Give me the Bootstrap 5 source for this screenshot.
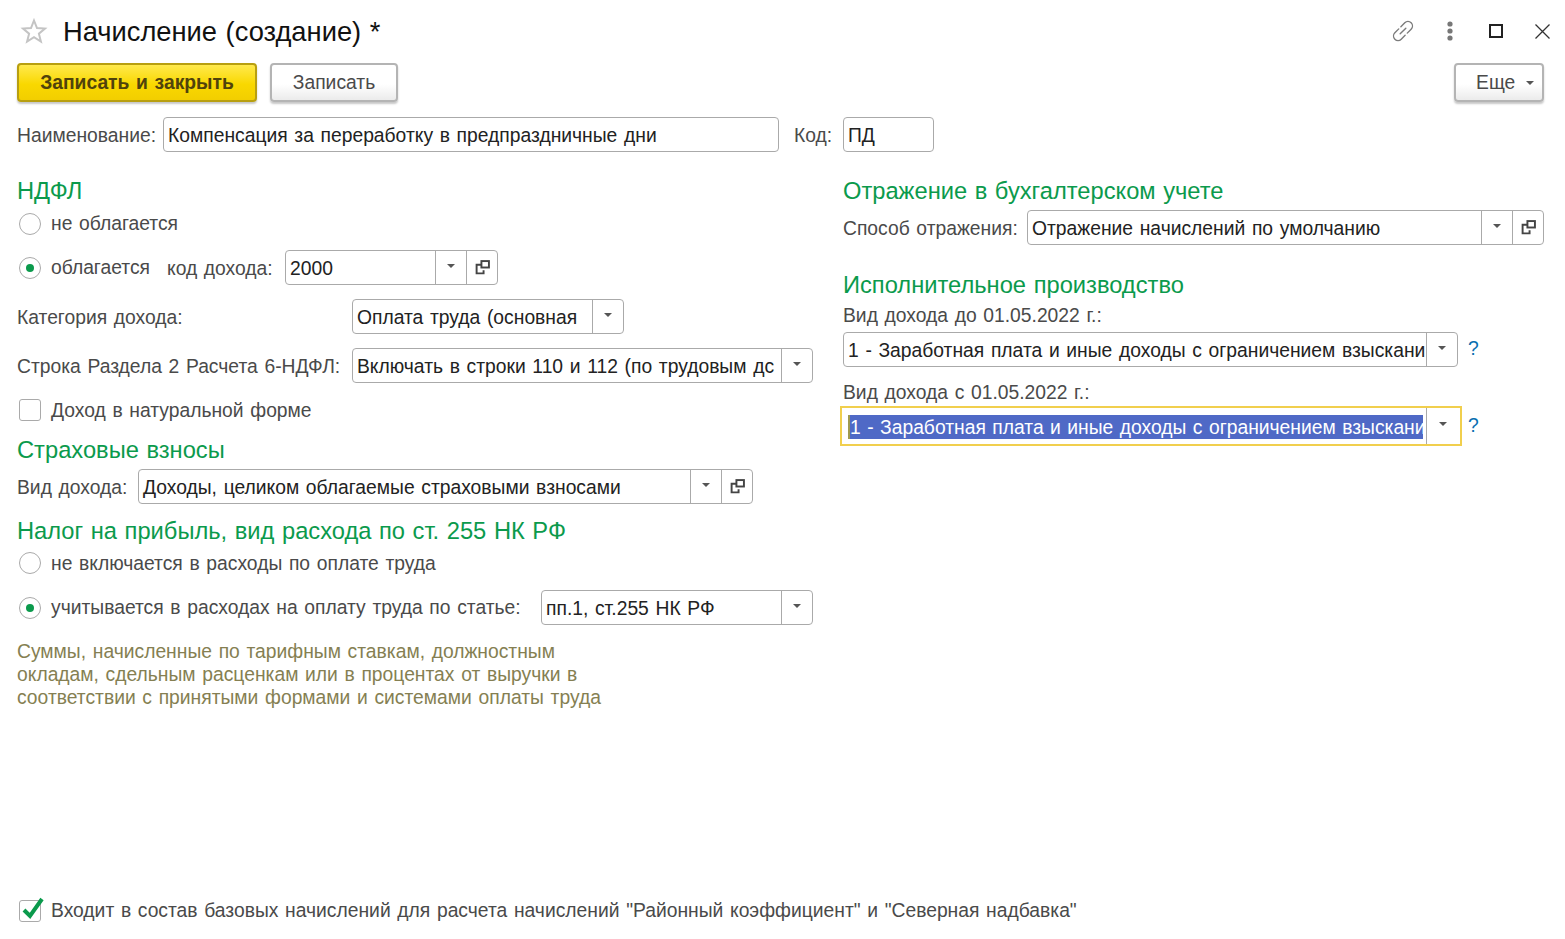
<!DOCTYPE html>
<html lang="ru"><head><meta charset="utf-8"><title>Начисление</title>
<link href="https://cdn.jsdelivr.net/npm/bootstrap@5.3.0/dist/css/bootstrap.min.css" rel="stylesheet">
<style>
html,body{height:939px;overflow:hidden}
body{font-family:"Liberation Sans",Arial,sans-serif;font-size:19.3px;word-spacing:1.3px;color:#4a4a4a;background:#fff;line-height:23px}
.page{height:939px;padding:0 21px 0 17px;position:relative}
.title-row{height:63px;padding-bottom:1px}
.title-txt{font-size:27.3px;word-spacing:1px;color:#111;margin-left:15px;line-height:31px}
.star{margin-left:3px}
.win-tools svg{display:block}
.ic-dots{margin-left:30px}
.ic-max{margin-left:34px}
.ic-close{margin-left:31px;margin-right:-7px}
.cmd{height:39px;border-radius:4px;font-size:19.3px;word-spacing:1.3px;line-height:33px;padding:0 0 1px;border:2px solid #b4b4b4;background:linear-gradient(#fff 55%,#ebebeb);color:#4a4a4a;box-shadow:0 2px 2px #c8c8c8}
.cmd-main{width:240px;font-weight:700;color:#50430c;border-color:#b89f10;background:linear-gradient(#ffe94d,#f9d800 55%,#f2ce00)}
.cmd-plain{width:128px;margin-left:13px}
.cmd-more{width:90px;padding-left:12px}
.caret-s{display:inline-block;width:0;height:0;border-left:4px solid transparent;border-right:4px solid transparent;border-top:4px solid #555}
.fld{height:35px;border:1px solid #aaa;border-radius:4px;background:#fff;color:#222;overflow:hidden;flex:none}
.fld-text{flex:1 1 0;min-width:0;padding:0 4px;white-space:nowrap;overflow:hidden;line-height:35px;height:33px}
.fld-btn{width:31px;border-left:1px solid #aaa;flex:none}
.lbl{white-space:nowrap;flex:none;padding-top:2px}
.l-name{width:138px}.f-name{width:616px;margin-left:8px}
.l-code{width:40px;margin-left:15px}.f-code{width:91px;margin-left:9px}
.l-rad{width:101px;flex:none}
.l-inc{width:109px;margin-left:15px}.f-inc{width:213px;margin-left:9px}
.l-wide{width:335px}.f-cat{width:272px}.f-line{width:461px}
.l-kind{width:112px}.f-kind{width:615px;margin-left:9px}
.f-ref{width:517px}.f-exec{width:615px}
.row-name{margin-top:15px}
.col-l{width:796px;flex:none}
.col-r{width:701px;flex:none;margin-left:30px}
.hd{font-size:23.7px;word-spacing:1px;color:#0b9a4c;line-height:28px;white-space:nowrap}
.rd{width:22px;height:22px;border:1px solid #aaa;border-radius:50%;margin-left:2px;margin-right:10px;flex:none;background:#fff}
.rd-on::after{content:"";width:8px;height:8px;border-radius:50%;background:#0b9a4c}
.cb{width:22px;height:22px;border:1px solid #aaa;border-radius:3px;margin-left:2px;margin-right:10px;flex:none;background:#fff;position:relative}
.cb svg{position:absolute;left:1px;top:-6px}
.h35{height:35px}
.h23{height:23px}
.dn{padding-top:2px}
.note{color:#857f52;line-height:23px;width:620px}
.q{color:#0a6fb0;margin-left:10px;line-height:33px}
.q2{margin-left:6px;line-height:40px}
.focus-wrap{width:622px;height:40px;border:2px solid #f1cf4d;margin-left:-3px;padding:0 0 0 6px;background:#fff;flex:none}
.focus-wrap .sel{background:#4f69c6;color:#fff;line-height:23px;height:24px;padding-top:1px;white-space:nowrap;overflow:hidden;flex:none;width:575px;margin-top:1px;border-left:2px solid #a09a50;word-spacing:1.1px}
.focus-wrap .fld-btn{height:36px;width:33px;margin-left:3px}
.bottom{position:absolute;left:17px;top:899px;height:23px}
.mt5{margin-top:5px}.mt6{margin-top:6px}.mt7{margin-top:7px}.mt13{margin-top:13px}.mt14{margin-top:14px}.mt15{margin-top:15px}.mt16{margin-top:16px}.mt25{margin-top:25px}.mt26{margin-top:26px}.mt2{margin-top:2px}
</style></head><body>
<div class="page">
 <div class="title-row d-flex align-items-center">
  <svg class="star" width="28" height="28" viewBox="0 0 28 28"><path d="M14 3.500l3 7.500 8 .6-6.100 5.100 2 7.800L14 20.200l-6.900 4.300 2-7.800L3 11.600l8-.6z" fill="none" stroke="#c4c4c4" stroke-width="2"/></svg>
  <div class="title-txt">Начисление (создание) *</div>
  <div class="win-tools d-flex align-items-center ms-auto">
   <svg width="24" height="24" viewBox="0 0 24 24" fill="none" stroke="#7c7c7c" stroke-width="1.400" stroke-linecap="round"><g transform="rotate(-45 12 12)"><path d="M10.500 7.500H5a4.500 4.500 0 0 0 0 9h5.500"/><path d="M13.500 7.500H19a4.500 4.500 0 0 1 0 9h-5.500"/><path d="M8 12h8"/></g></svg>
   <svg class="ic-dots" width="10" height="20" viewBox="0 0 10 20" fill="#777"><circle cx="5" cy="3" r="2.600"/><circle cx="5" cy="10" r="2.600"/><circle cx="5" cy="17" r="2.600"/></svg>
   <svg class="ic-max" width="14" height="14" viewBox="0 0 14 14" fill="none" stroke="#222" stroke-width="2"><rect x="1" y="1" width="12" height="12"/></svg>
   <svg class="ic-close" width="17" height="17" viewBox="0 0 17 17" fill="none" stroke="#333" stroke-width="1.300"><path d="M1.500 1.500l14 14M15.500 1.500l-14 14"/></svg>
  </div>
 </div>
 <div class="d-flex">
  <button class="btn cmd cmd-main" type="button">Записать и закрыть</button>
  <button class="btn cmd cmd-plain" type="button">Записать</button>
  <button class="btn cmd cmd-more ms-auto" type="button">Еще <span class="caret-s ms-1 align-middle"></span></button>
 </div>
 <div class="row-name d-flex align-items-center">
  <span class="lbl l-name">Наименование:</span>
  <div class="fld f-name d-flex"><div class="fld-text">Компенсация за переработку в предпраздничные дни</div></div>
  <span class="lbl l-code">Код:</span>
  <div class="fld f-code d-flex"><div class="fld-text">ПД</div></div>
 </div>
 <div class="d-flex">
  <div class="col-l">
   <div class="hd mt25">НДФЛ</div>
   <div class="d-flex align-items-center h23 mt7"><span class="rd"></span><span>не облагается</span></div>
   <div class="d-flex align-items-center h35 mt15">
    <span class="rd rd-on d-flex align-items-center justify-content-center"></span><span class="l-rad">облагается</span>
    <span class="lbl l-inc">код дохода:</span>
    <div class="fld f-inc d-flex"><div class="fld-text">2000</div>
     <div class="fld-btn d-flex align-items-center justify-content-center pb-1"><span class="caret-s"></span></div>
     <div class="fld-btn d-flex align-items-center justify-content-center"><svg width="15" height="15" viewBox="0 0 14 14" fill="none" stroke="#444" stroke-width="1.800"><rect x="6" y="1" width="7" height="6"/><path d="M6 4.500H1.500v8H8V9.500"/></svg></div></div>
   </div>
   <div class="d-flex align-items-center h35 mt14">
    <span class="lbl l-wide">Категория дохода:</span>
    <div class="fld f-cat d-flex"><div class="fld-text">Оплата труда (основная</div>
     <div class="fld-btn d-flex align-items-center justify-content-center pb-1"><span class="caret-s"></span></div></div>
   </div>
   <div class="d-flex align-items-center h35 mt14">
    <span class="lbl l-wide">Строка Раздела 2 Расчета 6-НДФЛ:</span>
    <div class="fld f-line d-flex"><div class="fld-text">Включать в строки 110 и 112 (по трудовым дс</div>
     <div class="fld-btn d-flex align-items-center justify-content-center pb-1"><span class="caret-s"></span></div></div>
   </div>
   <div class="d-flex align-items-center h23 mt15"><span class="cb"></span><span class="dn">Доход в натуральной форме</span></div>
   <div class="hd mt15">Страховые взносы</div>
   <div class="d-flex align-items-center h35 mt5">
    <span class="lbl l-kind">Вид дохода:</span>
    <div class="fld f-kind d-flex"><div class="fld-text">Доходы, целиком облагаемые страховыми взносами</div>
     <div class="fld-btn d-flex align-items-center justify-content-center pb-1"><span class="caret-s"></span></div>
     <div class="fld-btn d-flex align-items-center justify-content-center"><svg width="15" height="15" viewBox="0 0 14 14" fill="none" stroke="#444" stroke-width="1.800"><rect x="6" y="1" width="7" height="6"/><path d="M6 4.500H1.500v8H8V9.500"/></svg></div></div>
   </div>
   <div class="hd mt13">Налог на прибыль, вид расхода по ст. 255 НК РФ</div>
   <div class="d-flex align-items-center h23 mt6"><span class="rd"></span><span class="dn">не включается в расходы по оплате труда</span></div>
   <div class="d-flex align-items-center h35 mt16">
    <span class="rd rd-on d-flex align-items-center justify-content-center"></span><span>учитывается в расходах на оплату труда по статье:</span>
    <div class="fld f-cat d-flex ms-auto"><div class="fld-text">пп.1, ст.255 НК РФ</div>
     <div class="fld-btn d-flex align-items-center justify-content-center pb-1"><span class="caret-s"></span></div></div>
   </div>
   <div class="note mt15">Суммы, начисленные по тарифным ставкам, должностным окладам, сдельным расценкам или в процентах от выручки в соответствии с принятыми формами и системами оплаты труда</div>
  </div>
  <div class="col-r">
   <div class="hd mt25">Отражение в бухгалтерском учете</div>
   <div class="d-flex align-items-center h35 mt5">
    <span class="lbl">Способ отражения:</span>
    <div class="fld f-ref d-flex ms-auto"><div class="fld-text">Отражение начислений по умолчанию</div>
     <div class="fld-btn d-flex align-items-center justify-content-center pb-1"><span class="caret-s"></span></div>
     <div class="fld-btn d-flex align-items-center justify-content-center"><svg width="15" height="15" viewBox="0 0 14 14" fill="none" stroke="#444" stroke-width="1.800"><rect x="6" y="1" width="7" height="6"/><path d="M6 4.500H1.500v8H8V9.500"/></svg></div></div>
   </div>
   <div class="hd mt26">Исполнительное производство</div>
   <div class="mt5">Вид дохода до 01.05.2022 г.:</div>
   <div class="d-flex mt5">
    <div class="fld f-exec d-flex"><div class="fld-text">1 - Заработная плата и иные доходы с ограничением взыскани</div>
     <div class="fld-btn d-flex align-items-center justify-content-center pb-1"><span class="caret-s"></span></div></div>
    <span class="q">?</span>
   </div>
   <div class="mt14">Вид дохода с 01.05.2022 г.:</div>
   <div class="d-flex mt2">
    <div class="focus-wrap d-flex align-items-center"><div class="sel">1 - Заработная плата и иные доходы с ограничением взыскани</div>
     <div class="fld-btn d-flex align-items-center justify-content-center pb-1"><span class="caret-s"></span></div></div>
    <span class="q q2">?</span>
   </div>
  </div>
 </div>
 <div class="bottom d-flex align-items-center">
  <span class="cb"><svg width="26" height="26" viewBox="0 0 26 26" fill="none" stroke="#0b9a4c" stroke-width="4"><path d="M3 15l6 6L21 4"/></svg></span>
  <span>Входит в состав базовых начислений для расчета начислений "Районный коэффициент" и "Северная надбавка"</span>
 </div>
</div>
</body></html>
